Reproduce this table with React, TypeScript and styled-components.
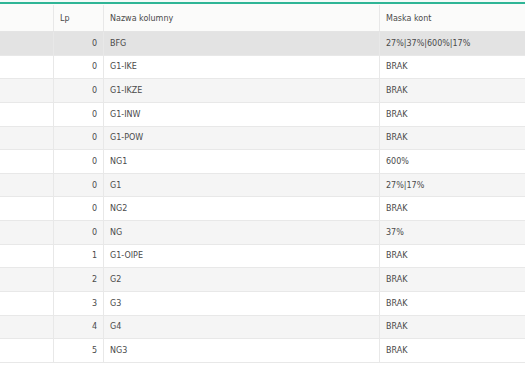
import styled, { createGlobalStyle } from 'styled-components';

const rows = [
  { lp: 0, name: 'BFG', mask: '27%|37%|600%|17%' },
  { lp: 0, name: 'G1-IKE', mask: 'BRAK' },
  { lp: 0, name: 'G1-IKZE', mask: 'BRAK' },
  { lp: 0, name: 'G1-INW', mask: 'BRAK' },
  { lp: 0, name: 'G1-POW', mask: 'BRAK' },
  { lp: 0, name: 'NG1', mask: '600%' },
  { lp: 0, name: 'G1', mask: '27%|17%' },
  { lp: 0, name: 'NG2', mask: 'BRAK' },
  { lp: 0, name: 'NG', mask: '37%' },
  { lp: 1, name: 'G1-OIPE', mask: 'BRAK' },
  { lp: 2, name: 'G2', mask: 'BRAK' },
  { lp: 3, name: 'G3', mask: 'BRAK' },
  { lp: 4, name: 'G4', mask: 'BRAK' },
  { lp: 5, name: 'NG3', mask: 'BRAK' },
];

const GlobalStyle = createGlobalStyle`
  html, body {
    margin: 0;
    padding: 0;
    background: #fff;
  }
  body {
    font-family: "DejaVu Sans", Verdana, sans-serif;
  }
`;

export default function App() {
  return (
    <>
      <GlobalStyle />
      <Wrapper>
        <Grid>
          <HeadRow>
            <Cell />
            <Cell>Lp</Cell>
            <Cell>Nazwa kolumny</Cell>
            <Cell>Maska kont</Cell>
          </HeadRow>
          {rows.map((r, i) => (
            <Row key={i} $odd={i % 2 === 1} $selected={i === 0}>
              <Cell />
              <Cell $right>{r.lp}</Cell>
              <Cell>{r.name}</Cell>
              <Cell>{r.mask}</Cell>
            </Row>
          ))}
        </Grid>
      </Wrapper>
    </>
  );
}

const Wrapper = styled.div`
  padding-top: 2px;
  background: #f4fbf9;
`;

const Grid = styled.div`
  border-top: 2px solid #2fb596;
  background: #fff;
`;

const HeadRow = styled.div`
  display: grid;
  grid-template-columns: 53px 50px 276px 1fr;
  height: 28px;
  padding-top: 1px;
  background: #fbfbfa;
  border-bottom: 1px solid #e4e4e4;
  box-sizing: border-box;
`;

const Row = styled.div<{ $odd?: boolean; $selected?: boolean }>`
  display: grid;
  grid-template-columns: 53px 50px 276px 1fr;
  height: 23.64px;
  box-sizing: border-box;
  border-bottom: 1px solid #e8e8e8;
  background: ${(p) => (p.$selected ? '#e3e3e3' : p.$odd ? '#ffffff' : '#f5f5f5')};
`;

const Cell = styled.div<{ $right?: boolean }>`
  display: flex;
  align-items: center;
  justify-content: ${(p) => (p.$right ? 'flex-end' : 'flex-start')};
  padding: 0 6px;
  font-size: 8px;
  color: #4a4a4a;
  border-left: 1px solid #e8e8e8;
  white-space: nowrap;
  overflow: hidden;

  &:first-child {
    border-left: none;
  }
`;
